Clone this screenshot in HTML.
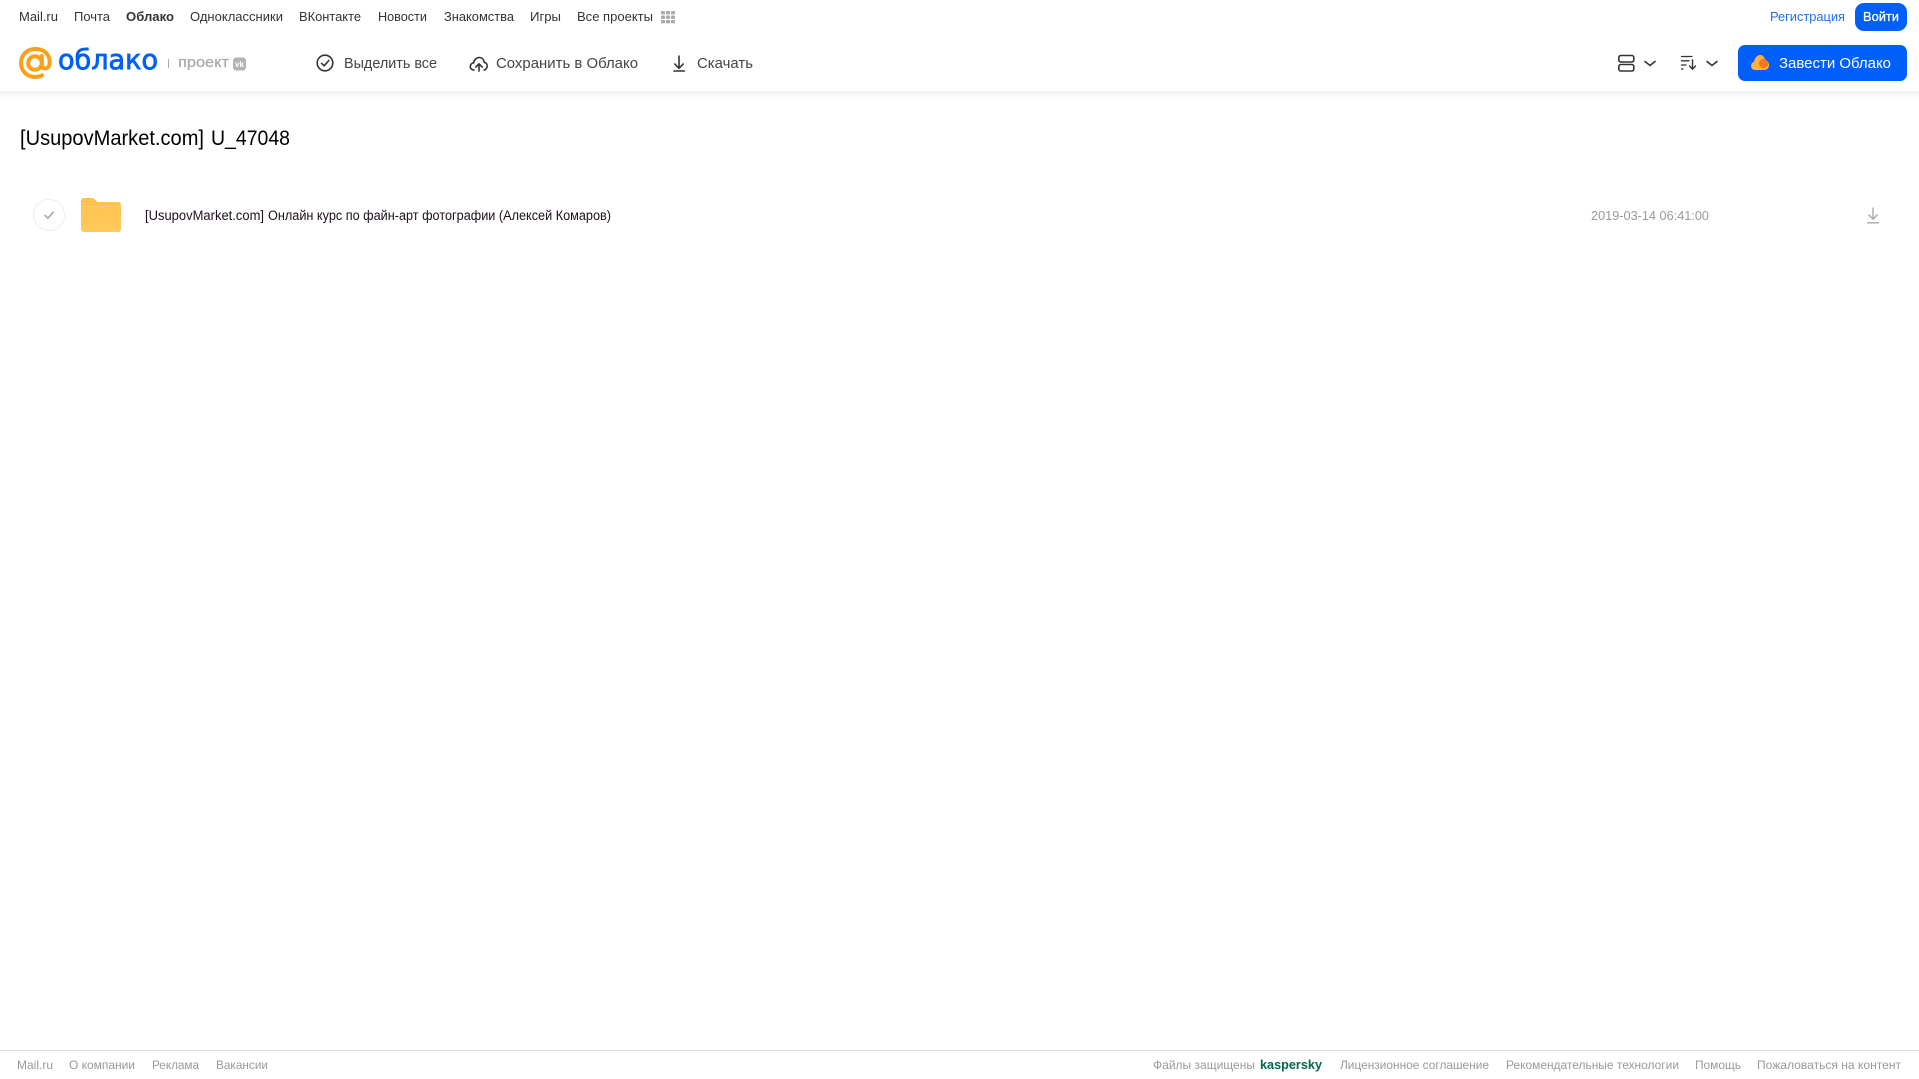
<!DOCTYPE html>
<html lang="ru">
<head>
<meta charset="utf-8">
<title>Облако Mail.ru</title>
<style>
html,body{margin:0;padding:0;background:#fff;width:1919px;height:1079px;overflow:hidden}
svg{display:block}
text{font-family:"Liberation Sans",Arial,sans-serif}
.nav{font-size:13px;fill:#333}
.act{font-size:14.5px;fill:#444}
.ft{font-size:12px;fill:#999}
</style>
</head>
<body>
<svg width="1919" height="1079" viewBox="0 0 1919 1079" xmlns="http://www.w3.org/2000/svg">
<defs>
<linearGradient id="sh" x1="0" y1="0" x2="0" y2="1"><stop offset="0" stop-color="#f3f3f3"/><stop offset="1" stop-color="#fff"/></linearGradient>
<linearGradient id="fo" x1="0" y1="0" x2="0" y2="1"><stop offset="0" stop-color="#ffc04a"/><stop offset="1" stop-color="#ffca5e"/></linearGradient>
</defs>
<rect width="1919" height="1079" fill="#fff"/>
<rect x="0" y="91" width="1919" height="10" fill="url(#sh)"/>

<!-- top nav -->
<g class="nav">
<text class="nav" x="19" y="21" textLength="39" lengthAdjust="spacingAndGlyphs">Mail.ru</text>
<text class="nav" x="74" y="21" textLength="36" lengthAdjust="spacingAndGlyphs">Почта</text>
<text class="nav" x="126" y="21" textLength="48" lengthAdjust="spacingAndGlyphs" font-weight="700">Облако</text>
<text class="nav" x="190" y="21" textLength="93" lengthAdjust="spacingAndGlyphs">Одноклассники</text>
<text class="nav" x="299" y="21" textLength="62" lengthAdjust="spacingAndGlyphs">ВКонтакте</text>
<text class="nav" x="378" y="21" textLength="49" lengthAdjust="spacingAndGlyphs">Новости</text>
<text class="nav" x="444" y="21" textLength="70" lengthAdjust="spacingAndGlyphs">Знакомства</text>
<text class="nav" x="530" y="21" textLength="31" lengthAdjust="spacingAndGlyphs">Игры</text>
<text class="nav" x="577" y="21" textLength="76" lengthAdjust="spacingAndGlyphs">Все проекты</text>
</g>
<g fill="#aaa">
<rect x="661" y="11" width="4" height="3.4" rx=".8"/><rect x="666" y="11" width="4" height="3.4" rx=".8"/><rect x="671" y="11" width="4" height="3.4" rx=".8"/>
<rect x="661" y="15.5" width="4" height="3.4" rx=".8"/><rect x="666" y="15.5" width="4" height="3.4" rx=".8"/><rect x="671" y="15.5" width="4" height="3.4" rx=".8"/>
<rect x="661" y="20" width="4" height="3.4" rx=".8"/><rect x="666" y="20" width="4" height="3.4" rx=".8"/><rect x="671" y="20" width="4" height="3.4" rx=".8"/>
</g>
<text x="1770" y="21" font-size="13" fill="#1f6fe8" textLength="75" lengthAdjust="spacingAndGlyphs">Регистрация</text>
<rect x="1855" y="3" width="52" height="28" rx="9" fill="#005ff9"/>
<text x="1863" y="21" font-size="13" fill="#fff" stroke="#fff" stroke-width=".3" textLength="36" lengthAdjust="spacingAndGlyphs">Войти</text>

<!-- logo -->
<g fill="none" stroke="#f9a11b" stroke-width="4" stroke-linecap="round">
<circle cx="35" cy="63" r="6.8"/>
<path d="M41.8 56V65.5C41.8 69.5 49 70 49.6 63.5C50.4 54 43.5 49 35.3 49C27 49 21 55.2 21 63C21 71.2 27.3 77 35.3 77C37.8 77 40 76.5 42 75.4"/>
</g>
<text x="58" y="69" font-size="27.5" fill="#005ff9" stroke="#005ff9" stroke-width=".8" style="font-family:'DejaVu Sans',sans-serif" textLength="100" lengthAdjust="spacingAndGlyphs">облако</text>
<rect x="168" y="59" width="1" height="9" fill="#aaa"/>
<text x="178" y="67" font-size="15" fill="#aaa" stroke="#aaa" stroke-width=".25" textLength="51" lengthAdjust="spacingAndGlyphs">проект</text>
<rect x="233" y="57.5" width="13" height="13" rx="3" fill="#b3b3b3"/>
<text x="235" y="67" font-size="8" font-weight="700" fill="#fff" textLength="9" lengthAdjust="spacingAndGlyphs">vk</text>

<!-- actions -->
<g fill="none" stroke="#333" stroke-width="1.6" stroke-linecap="round" stroke-linejoin="round">
<circle cx="325" cy="63" r="7.8"/>
<path d="M321.5 63.3L324.2 65.8L328.8 60.5"/>
<path d="M474 70C471 70 469.7 67.5 470.5 65.3C471 63.9 472.3 63 473.6 63C474 59.8 476.5 57.5 479 57.5C481.8 57.5 483.8 59.5 484.2 62.3C486 62.6 487.4 64.2 487.2 66.3C487 68.5 485.3 70 484 70"/>
<path d="M479 71V64M475.8 67L479 63.8L482.2 67"/>
<path d="M679 56V68M674.8 64L679 68.3L683.2 64M674 71H684.5"/>
</g>
<text class="act" x="344" y="68" textLength="93" lengthAdjust="spacingAndGlyphs">Выделить все</text>
<text class="act" x="496" y="68" textLength="142" lengthAdjust="spacingAndGlyphs">Сохранить в Облако</text>
<text class="act" x="697" y="68" textLength="56" lengthAdjust="spacingAndGlyphs">Скачать</text>

<!-- right controls -->
<g fill="none" stroke="#333" stroke-width="1.6" stroke-linecap="round" stroke-linejoin="round">
<rect x="1618.8" y="55.5" width="15" height="6.5" rx="2"/>
<rect x="1618.8" y="64.5" width="15" height="6.5" rx="2"/>
<path d="M1645 61.5L1650 65.5L1655 61.5"/>
<path d="M1707 61.5L1712 65.5L1717 61.5"/>
<path d="M1681.5 56.5H1692M1681.5 60.8H1689M1681.5 65H1686M1681.5 69H1683" stroke-width="1.3"/>
<path d="M1692.5 60V69M1689.5 66L1692.5 69.2L1695.5 66" stroke-width="1.4"/>
</g>
<rect x="1738" y="45" width="169" height="36" rx="7" fill="#005ff9"/>
<path d="M1755 70C1752.5 70 1751 68 1751 65.8C1751 63.8 1752.2 62.3 1754 61.8C1754.8 58 1757 55 1760.2 55C1763 55 1764.5 57.5 1765.2 60C1767.7 60.6 1769 62.8 1769 65C1769 68 1767 70 1764.5 70Z" fill="#ffb144"/>
<circle cx="1763.5" cy="63.5" r="4.6" fill="#f5761f"/>
<text x="1779" y="68" font-size="14.5" fill="#fff" textLength="112" lengthAdjust="spacingAndGlyphs">Завести Облако</text>

<!-- content -->
<text x="20" y="145" font-size="21.5" fill="#000" textLength="184" lengthAdjust="spacingAndGlyphs">[UsupovMarket.com]</text>
<text x="211" y="145" font-size="21.5" fill="#000" textLength="79" lengthAdjust="spacingAndGlyphs">U_47048</text>

<circle cx="49" cy="215" r="15.5" fill="#fff" stroke="#eee" stroke-width="1"/>
<path d="M45 215.3L48 218.2L53.2 212.2" fill="none" stroke="#999" stroke-width="1.4" stroke-linecap="round" stroke-linejoin="round"/>

<path d="M81 201C81 199.3 82.3 198 84 198H91.5C93 198 94 198.6 95 199.6L97.5 202H118C119.7 202 121 203.3 121 205V229C121 230.7 119.7 232 118 232H84C82.3 232 81 230.7 81 229Z" fill="url(#fo)"/>
<rect x="81" y="206" width="40" height="1" fill="#ffd27a" opacity=".7"/>

<text x="145" y="220" font-size="13.5" fill="#1d0f1d" textLength="119" lengthAdjust="spacingAndGlyphs">[UsupovMarket.com]</text>
<text x="268" y="220" font-size="13.5" fill="#1d0f1d" textLength="343" lengthAdjust="spacingAndGlyphs">Онлайн курс по файн-арт фотографии (Алексей Комаров)</text>
<text x="1591" y="220" font-size="13" fill="#999" textLength="118" lengthAdjust="spacingAndGlyphs">2019-03-14 06:41:00</text>
<path d="M1873 207.5V219M1868.5 214.5L1873 219.2L1877.5 214.5M1867 222.8H1879" fill="none" stroke="#aaa" stroke-width="1.4"/>

<!-- footer -->
<rect x="0" y="1050" width="1919" height="1" fill="#ddd"/>
<text class="ft" x="17" y="1069" textLength="36" lengthAdjust="spacingAndGlyphs">Mail.ru</text>
<text class="ft" x="69" y="1069" textLength="66" lengthAdjust="spacingAndGlyphs">О компании</text>
<text class="ft" x="152" y="1069" textLength="47" lengthAdjust="spacingAndGlyphs">Реклама</text>
<text class="ft" x="216" y="1069" textLength="52" lengthAdjust="spacingAndGlyphs">Вакансии</text>
<text class="ft" x="1153" y="1069" textLength="102" lengthAdjust="spacingAndGlyphs">Файлы защищены</text>
<text x="1260" y="1069" font-size="13" font-weight="700" fill="#00694f" textLength="62" lengthAdjust="spacingAndGlyphs">kaspersky</text>
<text class="ft" x="1340" y="1069" textLength="149" lengthAdjust="spacingAndGlyphs">Лицензионное соглашение</text>
<text class="ft" x="1506" y="1069" textLength="173" lengthAdjust="spacingAndGlyphs">Рекомендательные технологии</text>
<text class="ft" x="1695" y="1069" textLength="46" lengthAdjust="spacingAndGlyphs">Помощь</text>
<text class="ft" x="1757" y="1069" textLength="144" lengthAdjust="spacingAndGlyphs">Пожаловаться на контент</text>
</svg>
</body>
</html>
